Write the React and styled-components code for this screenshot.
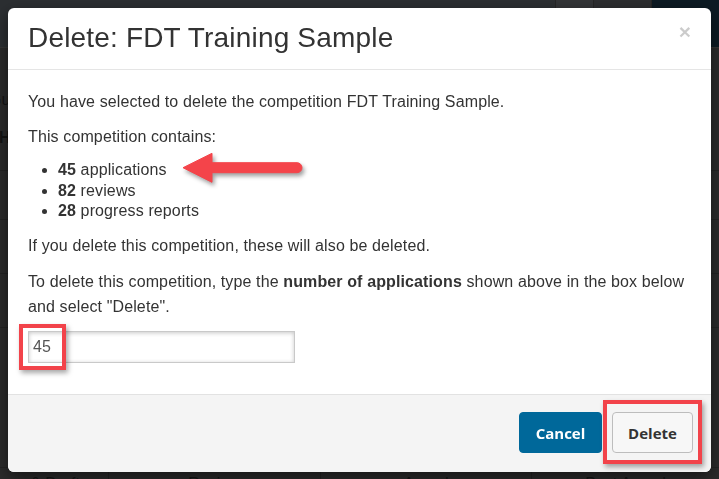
import React from "react";
import styled, { createGlobalStyle } from "styled-components";

const GlobalStyle = createGlobalStyle`
  html, body { margin: 0; padding: 0; }
  body {
    background: #2b2b2b;
    font-family: "Liberation Sans", Arial, sans-serif;
    overflow: hidden;
  }
  * { box-sizing: border-box; }
`;

const Page = styled.div`
  width: 719px;
  height: 479px;
  display: flex;
  flex-direction: column;
  overflow: hidden;
`;

const NavBar = styled.header`
  height: 48px;
  flex: none;
  display: flex;
  background: #2c2f32;
  border-bottom: 1px solid #363636;
`;

const NavSpacer = styled.div`
  flex: 1;
`;

const NavItem = styled.div`
  width: ${(p) => p.$w}px;
  background: ${(p) => p.$bg};
  border-left: 1px solid #262626;
`;

const Content = styled.main`
  flex: 1;
  display: flex;
  flex-direction: column;
`;

const Hero = styled.section`
  height: 123px;
  flex: none;
  display: flex;
  flex-direction: column;
  padding-top: 42px;
  gap: 18px;
  border-bottom: 1px solid #232323;
`;

const HeroLine = styled.div`
  font-size: 16px;
  line-height: 20px;
  color: #141414;
  font-weight: ${(p) => (p.$bold ? 700 : 400)};
  margin-left: ${(p) => p.$shift}px;
  white-space: nowrap;
`;

const Row = styled.div`
  height: ${(p) => p.$h}px;
  flex: none;
  border-bottom: 1px solid #232323;
`;

const TableHead = styled.div`
  flex: 1;
  display: grid;
  grid-template-columns: 108px 212px 211px 1fr;
  align-items: stretch;
`;

const HeadCell = styled.div`
  text-align: ${(p) => (p.$first ? "right" : "center")};
  padding: 6px ${(p) => (p.$first ? "20px" : "0")} 0 0;
  font-size: 16px;
  line-height: 20px;
  color: #151515;
  white-space: nowrap;
  overflow: hidden;
  display: flex;
  justify-content: ${(p) => (p.$first ? "flex-end" : "center")};
  border-left: ${(p) => (p.$first ? "none" : "1px solid #222")};
`;

const Modal = styled.div`
  position: fixed;
  left: 8px;
  top: 8px;
  width: 703px;
  height: 464px;
  background: #fff;
  border-radius: 6px;
  box-shadow: 0 5px 15px rgba(0, 0, 0, 0.5);
  display: flex;
  flex-direction: column;
  color: #333;
`;

const Header = styled.div`
  flex: none;
  display: flex;
  justify-content: space-between;
  align-items: flex-start;
  padding: 14px 20px 16px;
  border-bottom: 1px solid #e5e5e5;
`;

const Title = styled.h4`
  margin: 0;
  font-size: 28px;
  line-height: 31px;
  font-weight: 400;
  letter-spacing: 0.18px;
  color: #333;
`;

const Close = styled.button`
  background: none;
  border: 0;
  padding: 0;
  margin-top: -1px;
  font-family: "Liberation Sans", Arial, sans-serif;
  font-size: 21px;
  font-weight: 700;
  line-height: 1;
  color: #000;
  opacity: 0.2;
  cursor: pointer;
`;

const Body = styled.div`
  flex: 1;
  position: relative;
  padding: 21px 20px 0;
  font-size: 16px;
  letter-spacing: 0.12px;
`;

const Paragraph = styled.p`
  margin: 0 0 ${(p) => p.$mb ?? 13}px;
  line-height: ${(p) => p.$lh ?? 21}px;
`;

const List = styled.ul`
  margin: 0 0 13px;
  padding-left: 30px;
  line-height: 20.6px;
`;

const InputWrap = styled.div`
  position: relative;
  width: 267px;
`;

const TextInput = styled.input`
  display: block;
  width: 267px;
  height: 32px;
  padding: 0 4px;
  border: 1px solid #c9c9c9;
  border-radius: 0;
  box-shadow: inset 0 1px 4px rgba(0, 0, 0, 0.22);
  font-family: "Liberation Sans", Arial, sans-serif;
  font-size: 16px;
  color: #555;
  background: #fff;
  outline: none;
`;

const Highlight = styled.span`
  position: absolute;
  inset: ${(p) => p.$inset};
  border: 4px solid #f2434a;
  box-shadow: 2px 3px 5px rgba(0, 0, 0, 0.35);
  pointer-events: none;
`;

const Arrow = styled.svg`
  position: absolute;
  left: 172px;
  top: 80px;
  overflow: visible;
  filter: drop-shadow(2px 3px 2px rgba(0, 0, 0, 0.38));
`;

const Footer = styled.div`
  flex: none;
  height: 78px;
  display: flex;
  justify-content: flex-end;
  align-items: flex-start;
  gap: 10px;
  padding: 17px 18px 0;
  background: #f4f4f4;
  border-top: 1px solid #e2e2e2;
  border-radius: 0 0 6px 6px;
`;

const Marked = styled.div`
  position: relative;
`;

const Button = styled.button`
  height: 41px;
  width: ${(p) => p.$w}px;
  border-radius: 4px;
  font-family: "Open Sans", "Liberation Sans", sans-serif;
  font-size: 15px;
  font-weight: 700;
  cursor: pointer;
  background: ${(p) => (p.$primary ? "#00689a" : "#f7f7f7")};
  color: ${(p) => (p.$primary ? "#fff" : "#333")};
  border: ${(p) => (p.$primary ? "1px solid #00689a" : "1px solid #bdbdbd")};
`;

export default function App() {
  return (
    <>
      <GlobalStyle />
      <Page>
        <NavBar>
          <NavSpacer />
          <NavItem $w={38} $bg="#333537" />
          <NavItem $w={58} $bg="#2d2e30" />
          <NavItem $w={68} $bg="#0d1b24" />
        </NavBar>
        <Content>
          <Hero>
            <HeroLine $shift={-11}>Guidelines</HeroLine>
            <HeroLine $shift={-1} $bold>
              Home
            </HeroLine>
          </Hero>
          <Row $h={49} />
          <Row $h={54} />
          <Row $h={54} />
          <Row $h={140} />
          <TableHead>
            <HeadCell $first>Applications &amp; Drafts</HeadCell>
            <HeadCell>Review</HeadCell>
            <HeadCell>Award</HeadCell>
            <HeadCell>Post Award</HeadCell>
          </TableHead>
        </Content>

        <Modal role="dialog">
          <Header>
            <Title>Delete: FDT Training Sample</Title>
            <Close aria-label="Close">×</Close>
          </Header>
          <Body>
            <Paragraph $mb={14}>
              You have selected to delete the competition FDT Training Sample.
            </Paragraph>
            <Paragraph>This competition contains:</Paragraph>
            <List>
              <li>
                <b>45</b> applications
              </li>
              <li>
                <b>82</b> reviews
              </li>
              <li>
                <b>28</b> progress reports
              </li>
            </List>
            <Paragraph>If you delete this competition, these will also be deleted.</Paragraph>
            <Paragraph $lh={25} $mb={12}>
              To delete this competition, type the <b>number of applications</b> shown above in
              the box below and select "Delete".
            </Paragraph>
            <InputWrap>
              <TextInput defaultValue="45" />
              <Highlight $inset="-7px auto auto -9px" style={{ width: 47, height: 46 }} />
            </InputWrap>
            <Arrow width="130" height="36" viewBox="0 0 130 36">
              <path
                d="M3 17.7 L32 3.3 L32 12.7 L117 12.7 A5 5 0 0 1 117 22.7 L32 22.7 L32 32.3 Z"
                fill="#f4444a"
                stroke="#f4444a"
                strokeWidth="1"
                strokeLinejoin="round"
              />
            </Arrow>
          </Body>
          <Footer>
            <Button $primary $w={83}>
              Cancel
            </Button>
            <Marked>
              <Button $w={81}>Delete</Button>
              <Highlight $inset="-12px -9px -11px -9px" />
            </Marked>
          </Footer>
        </Modal>
      </Page>
    </>
  );
}
